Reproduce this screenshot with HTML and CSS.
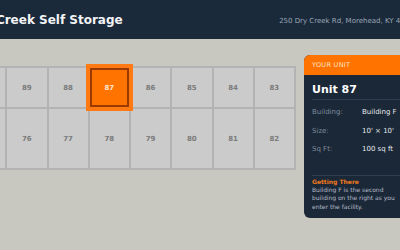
FILE: index.html
```html
<!DOCTYPE html>
<html lang="en">
<head>
    <meta charset="UTF-8">
    <meta name="viewport" content="width=device-width, initial-scale=1.0">
    <title>Dry Creek Self Storage - Unit 87</title>
    <link rel="stylesheet" href="styles.css">
</head>
<body>
    <div class="page">
        <div class="header">
            <h1>Dry Creek Self Storage</h1>
            <p class="address">250 Dry Creek Rd, Morehead, KY 40351</p>
        </div>

        <div class="main">
            <!-- unit map -->
            <div class="unit-grid">
                <div class="unit">90</div>
                <div class="unit">89</div>
                <div class="unit">88</div>
                <div class="unit active">87</div>
                <div class="unit">86</div>
                <div class="unit">85</div>
                <div class="unit">84</div>
                <div class="unit">83</div>
                <div class="unit tall">75</div>
                <div class="unit tall">76</div>
                <div class="unit tall">77</div>
                <div class="unit tall">78</div>
                <div class="unit tall">79</div>
                <div class="unit tall">80</div>
                <div class="unit tall">81</div>
                <div class="unit tall">82</div>
            </div>

            <!-- unit details -->
            <div class="panel">
                <div class="panel-head">YOUR UNIT</div>
                <div class="panel-body">
                    <h2>Unit 87</h2>
                    <div class="details">
                        <div class="row"><span class="label">Building:</span><span class="value">Building F</span></div>
                        <div class="row"><span class="label">Size:</span><span class="value">10' × 10'</span></div>
                        <div class="row"><span class="label">Sq Ft:</span><span class="value">100 sq ft</span></div>
                    </div>
                    <div class="directions">
                        <h3>Getting There</h3>
                        <p>Building F is the second building on the right as you enter the facility.</p>
                    </div>
                </div>
            </div>
        </div>
    </div>
</body>
</html>
```

FILE: styles.css
```css
* { margin: 0; padding: 0; box-sizing: border-box; }
body {
    font-family: "DejaVu Sans", Verdana, sans-serif;
    background: #c8c8c0;
    display: flex; justify-content: center;
    overflow: hidden; height: 100vh;
}
.page { width: 504px; flex-shrink: 0; }
.header {
    background: #1b2a3b; height: 39px;
    display: flex; align-items: center; justify-content: space-between;
    padding: 0 34px 0 20px;
}
.header h1 { color: #f2f4f6; font-size: 12px; font-weight: bold; }
.address { color: #9aa6b4; font-size: 7px; padding-top: 3px; }
.main { display: flex; align-items: flex-start; gap: 8px; padding: 16px; }
.unit-grid {
    width: 332px; margin-top: 11px;
    display: grid; grid-template-columns: repeat(8, 1fr);
    gap: 2px; padding: 2px; background: #b3b3b3;
}
.unit {
    height: 39px; background: #cbcbcb;
    display: flex; align-items: center; justify-content: center;
    color: #7a7a7a; font-size: 7px; font-weight: bold;
}
.unit.tall { height: 59px; }
.unit.active {
    background: #ff7300; color: #ffe6d2;
    border: 2px solid #9a3a00;
    box-shadow: 0 0 0 4px #ff7a12;
    position: relative; z-index: 1;
}
.panel {
    width: 112px; flex-shrink: 0;
    background: #1b2838; border-radius: 6px; overflow: hidden;
}
.panel-head {
    background: #ff7300; color: #ffe2c6; height: 20px;
    padding: 0 8px; display: flex; align-items: center;
    font-size: 6.5px; letter-spacing: 0.3px;
}
.panel-body { padding: 8px 8px 6px; }
.panel-body h2 {
    color: #ffffff; font-size: 11px; line-height: 14px;
    padding-bottom: 2px; border-bottom: 1px solid #2f3d4f;
}
.details { padding: 3px 0 16px; border-bottom: 1px solid #2f3d4f; }
.row { display: flex; font-size: 7px; line-height: 18.5px; }
.label { width: 50px; color: #7f8b99; }
.value { color: #e6e9ec; }
.directions { padding-top: 1px; }
.directions h3 { color: #f07a1e; font-size: 6px; line-height: 9px; }
.directions p { color: #b4bcc7; font-size: 6px; line-height: 8.7px; }
```
